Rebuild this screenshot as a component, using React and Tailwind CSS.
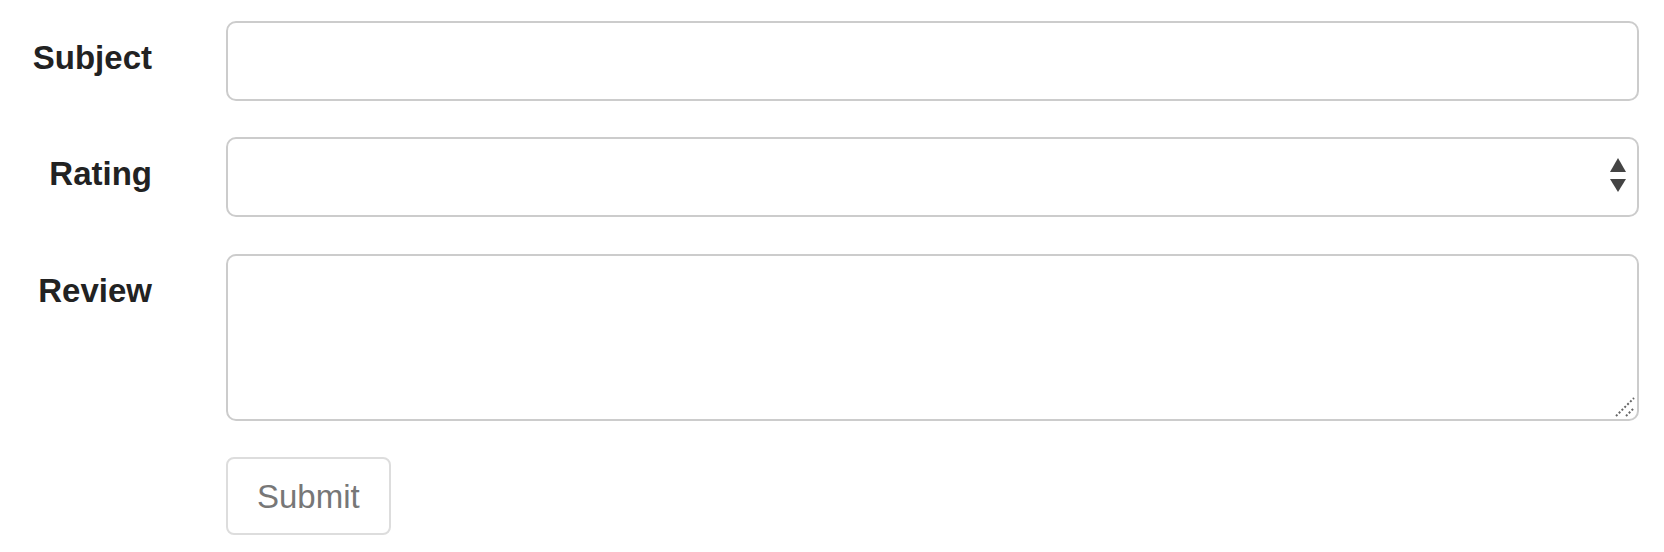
export default function App() {
  const labelCls = "text-right text-[33px] leading-[38px] font-bold text-[#222] pt-[18px]";
  const fieldCls = "w-full bg-white border-2 border-[#cccccc] rounded-[10px] outline-none";

  return (
    <div className="w-[1664px] h-[552px] bg-white" style={{ fontFamily: '"Liberation Sans", Arial, sans-serif' }}>
      <form className="grid grid-cols-[152px_1fr] gap-x-[74px] pt-[21px] pr-[25px]">
        <label className={labelCls}>Subject</label>
        <input type="text" className={fieldCls + " h-[80px] px-4"} />

        <label className={labelCls + " mt-[36px]"}>Rating</label>
        <div className="relative mt-[36px]">
          <select className={fieldCls + " h-[80px] px-4 appearance-none"} defaultValue="">
            <option value=""></option>
            <option>1</option>
            <option>2</option>
            <option>3</option>
            <option>4</option>
            <option>5</option>
          </select>
          <svg className="absolute right-[12px] top-[21px] pointer-events-none" width="18" height="36" viewBox="0 0 18 36">
            <path d="M9 0 L17 14 L1 14 Z" fill="#444" />
            <path d="M1 21 L17 21 L9 34 Z" fill="#444" />
          </svg>
        </div>

        <label className={labelCls + " mt-[37px]"}>Review</label>
        <div className="relative mt-[37px]">
          <textarea className={fieldCls + " h-[167px] px-4 py-3 resize-none block"} />
          <svg className="absolute right-[3px] bottom-[3px] pointer-events-none" width="22" height="22" viewBox="0 0 22 22">
            <line x1="2" y1="20" x2="20" y2="2" stroke="#666" strokeWidth="2" strokeDasharray="2 2" />
            <line x1="12" y1="20" x2="20" y2="12" stroke="#666" strokeWidth="2" strokeDasharray="2 2" />
          </svg>
        </div>

        <div />
        <div className="mt-[36px]">
          <button type="button" className="h-[78px] px-[29px] pt-[2px] bg-white border-2 border-[#dddddd] rounded-[8px] text-[33px] leading-[38px] text-[#777]">
            Submit
          </button>
        </div>
      </form>
    </div>
  );
}
